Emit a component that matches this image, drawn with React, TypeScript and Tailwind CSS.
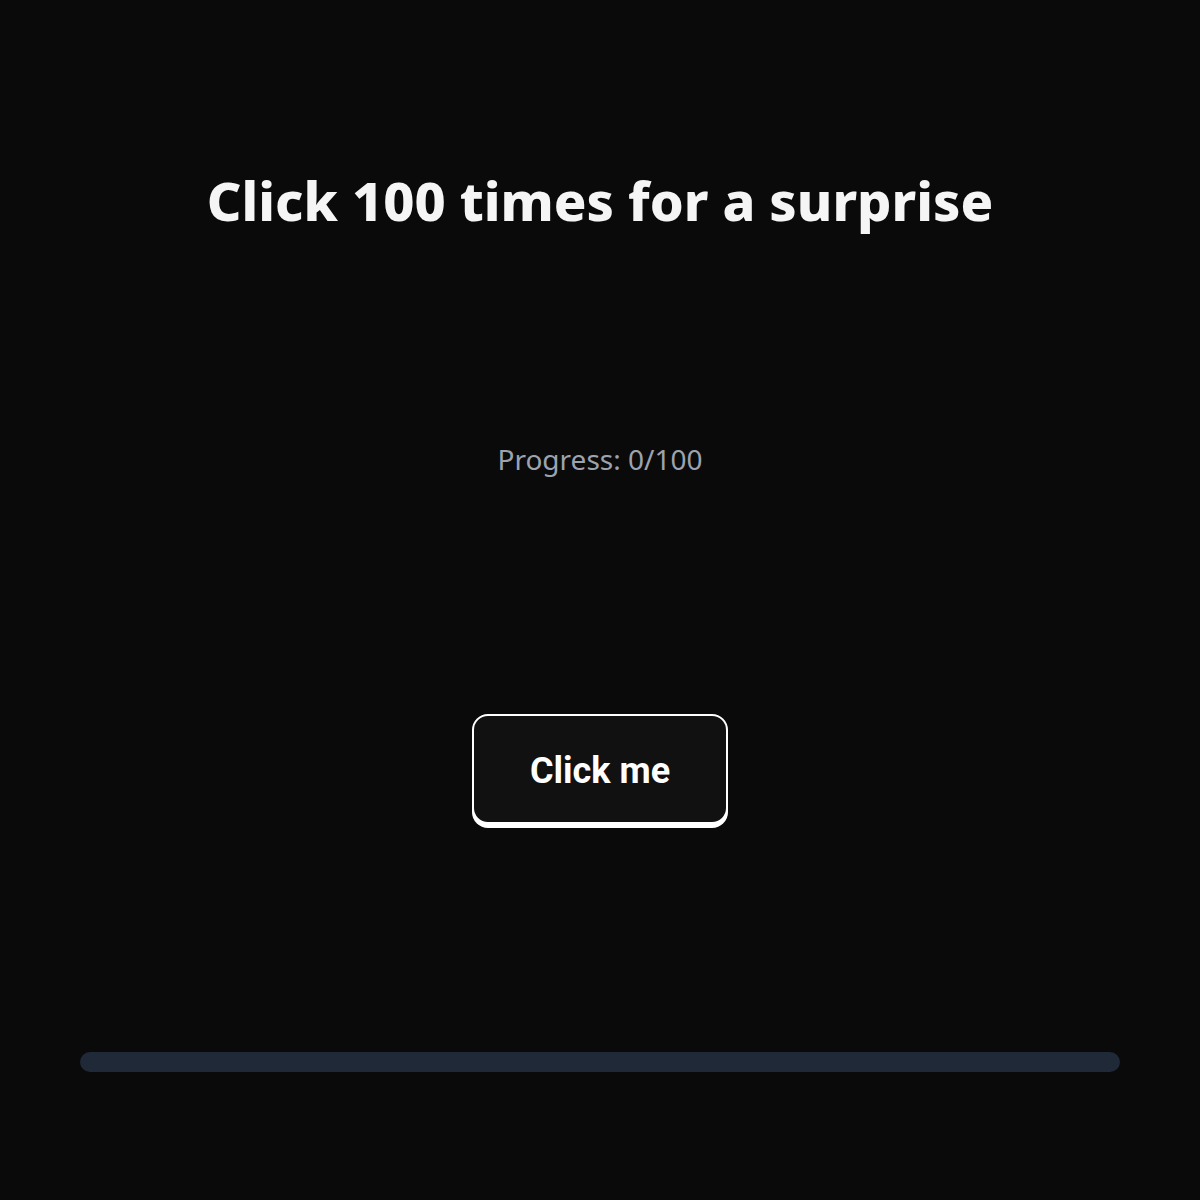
import { useState } from "react"

export default function App() {
  const [count, setCount] = useState(0)
  const goal = 100

  return (
    <main className="min-h-screen w-full bg-[#0a0a0a] flex flex-col items-center pt-[165px] px-[80px]" style={{ fontFamily: '"Noto Sans", sans-serif' }}>
      {/* Heading */}
      <h1 className="text-[54px] leading-[70px] font-extrabold text-[#f5f5f5] tracking-normal">
        Click 100 times for a surprise
      </h1>

      {/* Counter */}
      <p className="mt-[203px] text-[28px] leading-[42px] text-[#9ca3af]">
        Progress: {count}/{goal}
      </p>

      {/* Button */}
      <button
        onClick={() => setCount((c) => Math.min(c + 1, goal))}
        className="mt-[234px] w-[256px] h-[110px] pt-[3px] rounded-2xl border-2 border-white bg-[#111111] text-white text-[36px] leading-[40px] font-bold shadow-[0_4px_0_#ffffff]"
        style={{ fontFamily: 'Roboto, sans-serif' }}
      >
        Click me
      </button>

      {/* Progress bar */}
      <div className="mt-[228px] w-full h-[20px] rounded-full bg-[#1f2937] overflow-hidden">
        <div className="h-full bg-white rounded-full" style={{ width: `${(count / goal) * 100}%` }} />
      </div>
    </main>
  )
}
